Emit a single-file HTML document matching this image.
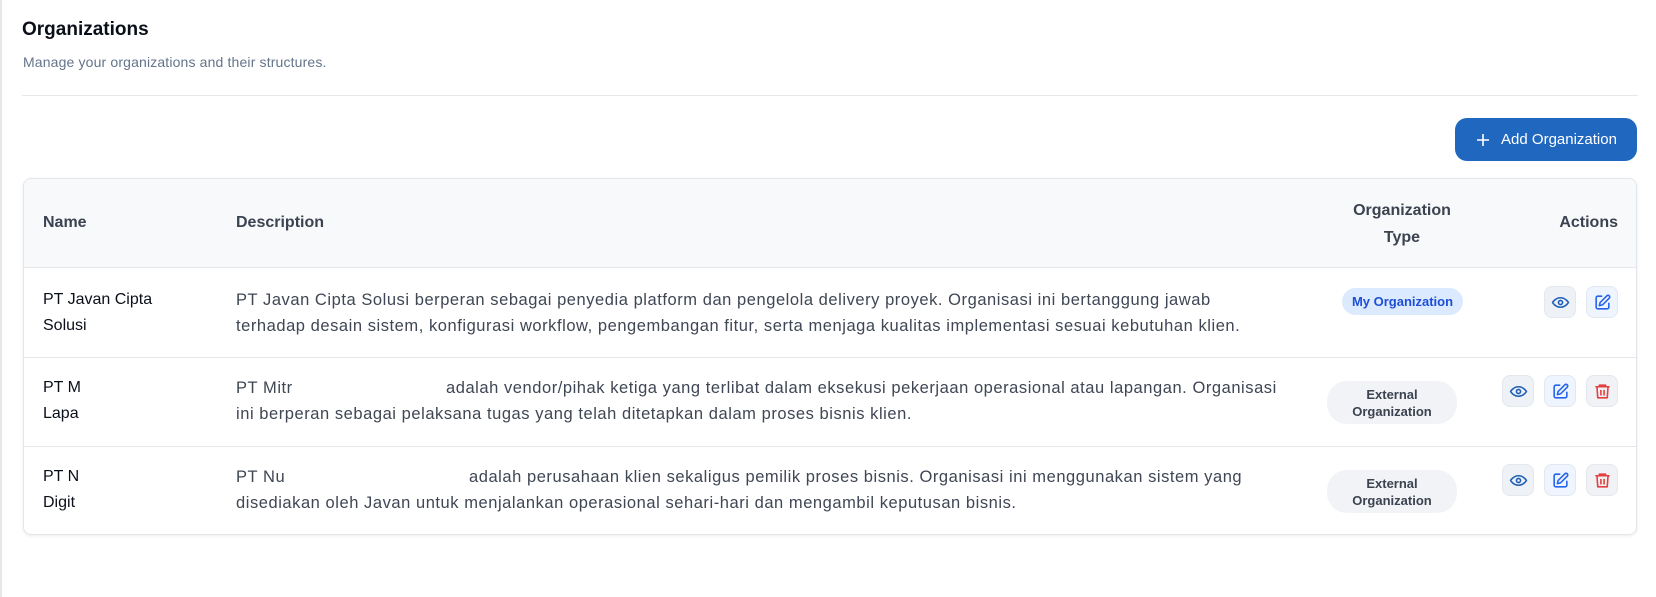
<!DOCTYPE html>
<html><head><meta charset="utf-8"><style>
*{box-sizing:border-box;margin:0;padding:0}
body{width:1656px;height:597px;background:#fff;font-family:"Liberation Sans",sans-serif;position:relative;overflow:hidden;border-left:2px solid #e5e7eb}
.abs{position:absolute}
h1{position:absolute;left:20px;top:19px;font-size:19px;font-weight:bold;color:#0b0f19}
.sub{left:21px;top:54px;font-size:14px;color:#64748b;letter-spacing:0.15px}
.div{left:20px;top:95px;width:1616px;height:1px;background:#e5e7eb}
.btn{left:1453px;top:118px;width:182px;height:43px;background:#2067c0;border-radius:12px;color:#fff;font-size:15px;display:flex;align-items:center;justify-content:center;gap:10px}
.table{left:21px;top:178px;width:1614px;height:357px;border:1px solid #e2e5ea;border-radius:8px;box-shadow:0 1px 3px rgba(0,0,0,.08);overflow:hidden}
.hdr{position:absolute;left:0;top:0;width:100%;height:89px;background:#f8f9fb;border-bottom:1px solid #e5e7eb}
.th{position:absolute;font-weight:bold;font-size:16px;color:#3b4250}
.row{position:absolute;left:0;width:100%;border-bottom:1px solid #e5e7eb}
.nm{position:absolute;left:19px;font-size:16px;color:#0b0f19;line-height:26px}
.ds{position:absolute;left:212px;font-size:16.5px;letter-spacing:0.55px;color:#3f4654;line-height:26px;white-space:nowrap}
.badge{position:absolute;border-radius:20px;font-size:13px;font-weight:bold;text-align:center}
.ic{position:absolute;width:32px;height:32px;border-radius:8px;border:1px solid #e3e7ee;display:flex;align-items:center;justify-content:center}
</style></head><body>
<h1>Organizations</h1>
<div class="abs sub">Manage your organizations and their structures.</div>
<div class="abs div"></div>
<div class="abs btn"><svg width="16" height="16" viewBox="0 0 16 16"><path d="M8 2v12M2 8h12" stroke="#fff" stroke-width="1.6"/></svg>Add Organization</div>
<div class="abs table">
<div class="hdr">
<div class="th" style="left:19px;top:35px">Name</div>
<div class="th" style="left:212px;top:35px">Description</div>
<div class="th" style="left:1290px;top:18px;width:176px;text-align:center;line-height:27px">Organization<br>Type</div>
<div class="th" style="right:18px;top:35px">Actions</div>
</div>
<div class="row" style="top:89px;height:90px">
<div class="nm" style="top:19px">PT Javan Cipta<br>Solusi</div>
<div class="ds" style="top:19px">PT Javan Cipta Solusi berperan sebagai penyedia platform dan pengelola delivery proyek. Organisasi ini bertanggung jawab<br>terhadap desain sistem, konfigurasi workflow, pengembangan fitur, serta menjaga kualitas implementasi sesuai kebutuhan klien.</div>
<div class="badge" style="left:1318px;top:20px;width:121px;height:27px;line-height:27px;background:#dbeafe;color:#1d4ed8">My Organization</div>
</div>
<div class="row" style="top:179px;height:89px">
<div class="nm" style="top:17px">PT M<br>Lapa</div>
<div class="ds" style="top:17px">PT Mitr</div>
<div class="ds" style="top:17px;left:422px">adalah vendor/pihak ketiga yang terlibat dalam eksekusi pekerjaan operasional atau lapangan. Organisasi</div>
<div class="ds" style="top:43px">ini berperan sebagai pelaksana tugas yang telah ditetapkan dalam proses bisnis klien.</div>
<div class="badge" style="left:1303px;top:23px;width:130px;height:43px;padding-top:5px;line-height:17px;background:#f1f3f6;color:#3b4250">External<br>Organization</div>
</div>
<div class="row" style="top:268px;height:89px;border-bottom:none">
<div class="nm" style="top:17px">PT N<br>Digit</div>
<div class="ds" style="top:17px">PT Nu</div>
<div class="ds" style="top:17px;left:445px">adalah perusahaan klien sekaligus pemilik proses bisnis. Organisasi ini menggunakan sistem yang</div>
<div class="ds" style="top:43px">disediakan oleh Javan untuk menjalankan operasional sehari-hari dan mengambil keputusan bisnis.</div>
<div class="badge" style="left:1303px;top:23px;width:130px;height:43px;padding-top:5px;line-height:17px;background:#f1f3f6;color:#3b4250">External<br>Organization</div>
</div>
</div>
<svg width="0" height="0" style="position:absolute"><defs>
<symbol id="eye" viewBox="0 0 24 24"><path d="M2 12s3.5-6 10-6 10 6 10 6-3.5 6-10 6S2 12 2 12z" fill="none" stroke="#1f5fb8" stroke-width="2"/><circle cx="12" cy="12" r="2.6" fill="none" stroke="#1f5fb8" stroke-width="2"/></symbol>
<symbol id="ed" viewBox="0 0 24 24"><path d="M11 4H6a2 2 0 0 0-2 2v12a2 2 0 0 0 2 2h12a2 2 0 0 0 2-2v-5" fill="none" stroke="#2563eb" stroke-width="2" stroke-linecap="round"/><path d="M17.5 3.5a2.1 2.1 0 0 1 3 3L12 15l-4 1 1-4z" fill="none" stroke="#2563eb" stroke-width="2" stroke-linejoin="round"/></symbol>
<symbol id="tr" viewBox="0 0 24 24"><path d="M3 6h18M8 6V4h8v2M5 6l1 14h12l1-14M10 10v7M14 10v7" fill="none" stroke="#e53e3e" stroke-width="2" stroke-linejoin="round"/></symbol>
</defs></svg>
<div class="ic" style="left:1542px;top:286px;background:#eef1f6"><svg width="19" height="19"><use href="#eye"/></svg></div>
<div class="ic" style="left:1584px;top:286px;background:#eff5fe"><svg width="19" height="19"><use href="#ed"/></svg></div>
<div class="ic" style="left:1500px;top:375px;background:#eef1f6"><svg width="19" height="19"><use href="#eye"/></svg></div>
<div class="ic" style="left:1542px;top:375px;background:#eff5fe"><svg width="19" height="19"><use href="#ed"/></svg></div>
<div class="ic" style="left:1584px;top:375px;background:#f1f2f5"><svg width="19" height="19"><use href="#tr"/></svg></div>
<div class="ic" style="left:1500px;top:464px;background:#eef1f6"><svg width="19" height="19"><use href="#eye"/></svg></div>
<div class="ic" style="left:1542px;top:464px;background:#eff5fe"><svg width="19" height="19"><use href="#ed"/></svg></div>
<div class="ic" style="left:1584px;top:464px;background:#f1f2f5"><svg width="19" height="19"><use href="#tr"/></svg></div>
</body></html>
